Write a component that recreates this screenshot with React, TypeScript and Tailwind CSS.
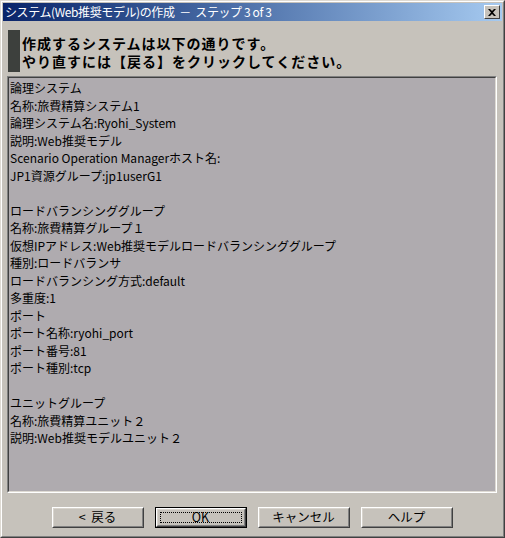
import React from "react";

const lines: string[] = [
  "論理システム",
  "名称:旅費精算システム1",
  "論理システム名:Ryohi_System",
  "説明:Web推奨モデル",
  "Scenario Operation Managerホスト名:",
  "JP1資源グループ:jp1userG1",
  "",
  "ロードバランシンググループ",
  "名称:旅費精算グループ１",
  "仮想IPアドレス:Web推奨モデルロードバランシンググループ",
  "種別:ロードバランサ",
  "ロードバランシング方式:default",
  "多重度:1",
  "ポート",
  "ポート名称:ryohi_port",
  "ポート番号:81",
  "ポート種別:tcp",
  "",
  "ユニットグループ",
  "名称:旅費精算ユニット２",
  "説明:Web推奨モデルユニット２",
];

function WinButton({ label, focused }: { label: string; focused?: boolean }) {
  const inner = (
    <div className="h-full w-full border-t border-l border-t-white border-l-white border-b border-r border-b-[#404040] border-r-[#404040]">
      <div className="h-full w-full border-t border-l border-t-[#d8d4cd] border-l-[#d8d4cd] border-b border-r border-b-[#808080] border-r-[#808080] flex items-center justify-center p-[2px]">
        <div
          className={
            "h-full w-full flex items-center justify-center text-[12.5px] leading-none text-black whitespace-pre " +
            (focused ? "border border-dotted border-black" : "")
          }
        >
          {label}
        </div>
      </div>
    </div>
  );
  return (
    <div className={"w-[92px] h-[21px] " + (focused ? "border border-black" : "")}>
      {inner}
    </div>
  );
}

export default function App() {
  return (
    <div className="w-[505px] h-[538px] flex border-t border-l border-t-[#dedad3] border-l-[#dedad3] border-b border-r border-b-[#404040] border-r-[#404040] font-['Noto_Sans_CJK_JP',sans-serif]">
      <div className="flex-1 flex flex-col bg-[#c6c2bb] border-t border-l border-t-white border-l-white border-b border-r border-b-[#808080] border-r-[#808080] p-[1px]">
        {/* TITLE BAR */}
        <div className="h-[18px] flex items-center justify-between bg-gradient-to-r from-[#0a246a] to-[#a6caf0] pl-[2px] pr-[2px]">
          <span className="text-white text-[12px] tracking-[-0.4px] leading-none whitespace-pre">
            システム(Web推奨モデル)の作成  －  ステップ 3 of 3
          </span>
          <div className="w-[16px] h-[14px] bg-[#c6c2bb] border-t border-l border-t-white border-l-white border-b border-r border-b-[#404040] border-r-[#404040] flex items-center justify-center">
            <svg width="8" height="7" viewBox="0 0 8 7">
              <path d="M0 0h2l2 2 2-2h2L5 3.5 8 7H6L4 5 2 7H0l3-3.5z" fill="black" />
            </svg>
          </div>
        </div>

        {/* BODY */}
        <div className="flex-1 flex flex-col pl-[4px] pr-[5px]">
          <div className="flex mt-[9px] ml-[1px] h-[42px]">
            <div className="w-[12px] h-full bg-[#3d403d]" />
            <div className="ml-[2px] pt-[4px] text-[14px] tracking-[1px] leading-[18px] font-bold text-black whitespace-nowrap">
              <div>作成するシステムは以下の通りです。</div>
              <div>やり直すには【戻る】をクリックしてください。</div>
            </div>
          </div>

          {/* SUMMARY BOX */}
          <div className="mt-[4px] h-[417px] border-t border-l border-t-[#808080] border-l-[#808080] border-b border-r border-b-white border-r-white">
            <div className="h-full border-t border-l border-t-[#404040] border-l-[#404040] border-b border-r border-b-[#dedad3] border-r-[#dedad3] bg-[#afabaf] pt-[1px] pl-[1px] overflow-hidden">
              {lines.map((l, i) => (
                <div
                  key={i}
                  className="h-[17.5px] text-[12px] leading-[17.5px] text-black whitespace-nowrap"
                >
                  {l}
                </div>
              ))}
            </div>
          </div>

          {/* BUTTONS */}
          <div className="mt-[14px] flex justify-center gap-[11px]">
            <WinButton label="<  戻る" />
            <WinButton label="OK" focused />
            <WinButton label="キャンセル" />
            <WinButton label="ヘルプ" />
          </div>
        </div>
      </div>
    </div>
  );
}
